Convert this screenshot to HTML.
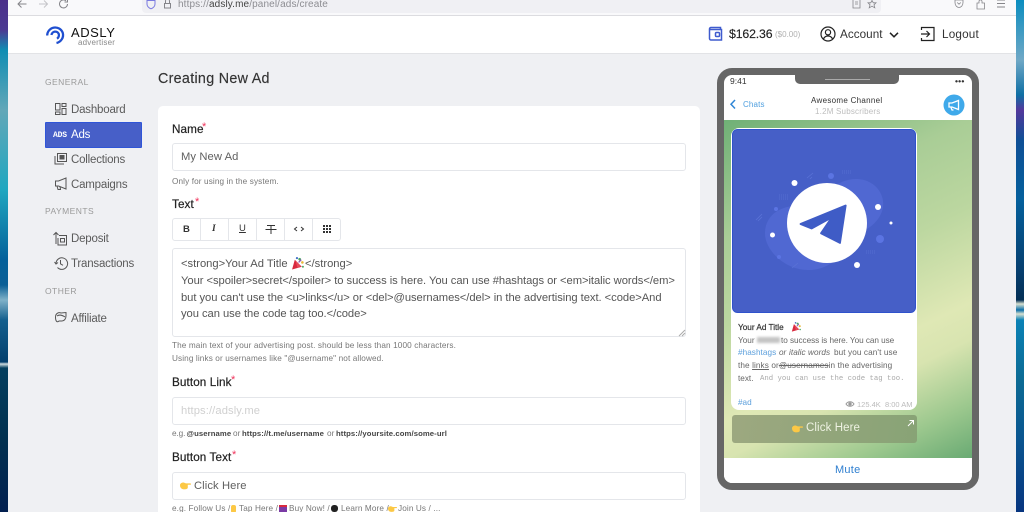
<!DOCTYPE html>
<html><head><meta charset="utf-8"><title>Adsly</title>
<style>
html,body{margin:0;padding:0;width:1024px;height:512px;overflow:hidden;background:#eff0f3}
body{position:relative;font-family:"Liberation Sans","DejaVu Sans",sans-serif;filter:blur(.35px)}
.a{position:absolute}
.t{position:absolute;white-space:nowrap;line-height:1}
.nav{font-size:11.5px;color:#5b5b5b;left:71px;letter-spacing:-.2px}
.sec{font-size:8.5px;color:#9a9a9a;left:45px;letter-spacing:.45px}
.lab{font-size:11.7px;color:#222;left:172px;font-weight:400;-webkit-text-stroke:.2px #222;letter-spacing:.1px}
.req{color:#f0325a;font-size:11px;position:absolute;line-height:1}
.inp{position:absolute;left:172px;width:512px;height:26px;border:1px solid #e4e6ea;border-radius:3px;background:#fff}
.val{font-size:11.2px;color:#5f5f5f;left:181px;letter-spacing:.1px}
.hlp{font-size:8.2px;color:#777;left:172px;letter-spacing:.12px}
.hb{font-size:7.7px;color:#444;font-weight:bold;letter-spacing:.1px}
.ta{font-size:11.2px;color:#555;left:181px}
.p{font-size:8.2px;color:#666}
svg{position:absolute;overflow:visible}
</style></head><body>
<svg style="left:0;top:0" width="0" height="0"><defs>
<symbol id="hand" viewBox="0 0 12 9"><path d="M0 4.5C0 2.5 2 1.5 4 1.5L6.5 2.5H11.2C12.2 2.5 12.2 4 11.2 4H8.5V7C8.5 8.5 7 9 4.5 9C1.5 9 0 7 0 4.5Z" fill="#fcc845"/></symbol>
<symbol id="party" viewBox="0 0 12 12"><path d="M1 11.500L3.500 2.500L10 9Z" fill="#d8293f"/><path d="M4 3L9 8.500L6 10Z" fill="#e84a5a"/><circle cx="8" cy="2" r="1.200" fill="#4aa564"/><circle cx="10.500" cy="5" r="1.200" fill="#e9b93a"/><circle cx="5.500" cy="1" r="1" fill="#4270c8"/><path d="M7 5L9.500 2.500" stroke="#8a5ab5" stroke-width="1.200"/><circle cx="11" cy="9" r=".9" fill="#4aa564"/></symbol>
</defs></svg>

<!-- desktop strips -->
<div class="a" style="left:0;top:0;width:8px;height:512px;background:linear-gradient(180deg,#4b2f8a 0,#4b3a92 30px,#0f8db3 50px,#62a7b8 110px,#1fa7c0 190px,#04609a 260px,#0b5f96 285px,#7fb1c8 300px,#145f8d 320px,#033f6d 362px,#cfdde0 364px,#043f5f 368px,#02304f 440px,#021f4f 512px)"></div>
<div class="a" style="left:1016px;top:0;width:8px;height:512px;background:linear-gradient(180deg,#0b8dbf 0,#6fa8c6 60px,#0f6fa4 95px,#53389c 110px,#0f4f96 140px,#05609c 200px,#063f6f 270px,#032f55 300px,#d8e0d0 304px,#0a6ea8 310px,#d8e0d0 314px,#0b82b6 320px,#0c6b94 380px,#0a5590 440px,#07357f 512px)"></div>

<!-- browser bar -->
<div class="a" style="left:8px;top:0;width:1008px;height:15px;background:#f9f9fb;border-bottom:1px solid #dcdce0"></div>
<div class="a" style="left:142px;top:0;width:739px;height:13px;background:#f0f0f4;border-radius:0 0 4px 4px"></div>
<svg style="left:0;top:0" width="1024" height="16" fill="none" stroke="#85858a" stroke-width="1">
<path d="M26.500 4H18M21.500 .5L18 4L21.500 7.500"/>
<path d="M39 4H47.500M44 .5L47.500 4L44 7.500" stroke="#c4c4c8"/>
<path d="M67.500 4A4 4 0 1 1 66 .8M67.500 -1V2H64.500"/>
<path d="M147 .5H155V4C155 6.500 153 8 151 8.800C149 8 147 6.500 147 4Z" stroke="#7a7ae0"/>
<path d="M164.500 3.500H170.500V8H164.500ZM165.500 3.500V1A2 2 0 0 1 169.500 1V3.500"/>
<path d="M853 -1H860V8H853ZM855 2H858M855 4H858" stroke-width=".8"/>
<path d="M872 .5L873.300 2.800H876L874 4.800L874.800 7.800L872 6.200L869.200 7.800L870 4.800L868 2.800H870.700Z" stroke-width=".8"/>
<path d="M955 0H963V2.500C963 5.500 961 7.500 959 7.500C957 7.500 955 5.500 955 2.500ZM957.200 2.500L959 4.200L960.800 2.500" stroke-width=".8"/>
<path d="M977 3H979V1C979.500 -.5 981.500 -.5 982 1V3H984.500V9H977Z" stroke-width=".8"/>
<path d="M997 0H1005M997 3.500H1005M997 7H1005"/>
</svg>
<div class="t" style="left:178px;top:0;font-size:10px;color:#8d8d92;letter-spacing:.12px">https://<span style="color:#444">adsly.me</span>/panel/ads/create</div>

<!-- header -->
<div class="a" style="left:8px;top:16px;width:1008px;height:37px;background:#fff;border-bottom:1px solid #e2e3e6"></div>
<svg style="left:44px;top:24px" width="22" height="22" fill="none" stroke="#1f4fd0" stroke-width="2.300">
<path d="M3.200 11.500A8 8 0 0 1 18.800 9C20 13.500 17 18 12.500 19"/>
<path d="M7.500 11A3.800 3.800 0 0 1 14.800 10C15.200 12 14.500 13.700 13 14.700"/>
</svg>
<div class="t" style="left:71px;top:26px;font-size:13px;color:#111;letter-spacing:.55px">ADSLY</div>
<div class="t" style="left:78px;top:38.500px;font-size:8px;color:#8a8a8a;letter-spacing:.2px">advertiser</div>

<svg style="left:708px;top:26px" width="16" height="16" fill="none" stroke="#3f5bce" stroke-width="1.500">
<path d="M1.500 3V12.500A1.500 1.500 0 0 0 3 14H13.500V3.500H3A1.500 1.500 0 0 1 1.500 3A1.500 1.500 0 0 1 3 1.500H12.500V3.500"/><rect x="7.500" y="6.500" width="4" height="4" rx="1"/>
</svg>
<div class="t" style="left:729px;top:28px;font-size:12.300px;color:#222;letter-spacing:-.15px;-webkit-text-stroke:.15px #222">$162.36</div>
<div class="t" style="left:775px;top:30.500px;font-size:8px;color:#b0b0b0">($0.00)</div>
<svg style="left:820px;top:26px" width="16" height="16" fill="none" stroke="#222" stroke-width="1.200">
<circle cx="8" cy="8" r="7"/><circle cx="8" cy="6.300" r="2.600"/><path d="M3.500 13C4.500 10.500 6 10 8 10C10 10 11.500 10.500 12.500 13"/>
</svg>
<div class="t" style="left:840px;top:29px;font-size:11.700px;color:#333;letter-spacing:.05px">Account</div>
<svg style="left:888px;top:31px" width="12" height="8" fill="none" stroke="#222" stroke-width="1.500"><path d="M2 1.800L6 5.800L10 1.800"/></svg>
<svg style="left:920px;top:26px" width="16" height="16" fill="none" stroke="#222" stroke-width="1.200">
<path d="M1.500 4V1.500H14V14.500H1.500V12M1 8H9.500M6.500 5L9.500 8L6.500 11"/>
</svg>
<div class="t" style="left:942px;top:29px;font-size:11.700px;color:#333;letter-spacing:.2px">Logout</div>

<!-- sidebar -->
<div class="t sec" style="top:78px">GENERAL</div>
<div class="t nav" style="top:104.500px">Dashboard</div>
<div class="a" style="left:45px;top:122px;width:95px;height:24px;background:#475fc8;border:.5px solid #2f55d8;border-radius:1px"></div>
<div class="t" style="left:53px;top:131px;font:bold 8px 'Liberation Mono',monospace;color:#fff;letter-spacing:-.2px">ADS</div>
<div class="t nav" style="top:129.500px;color:#fff">Ads</div>
<div class="t nav" style="top:154.500px">Collections</div>
<div class="t nav" style="top:179.500px">Campaigns</div>
<div class="t sec" style="top:207px">PAYMENTS</div>
<div class="t nav" style="top:233.500px">Deposit</div>
<div class="t nav" style="top:258.500px">Transactions</div>
<div class="t sec" style="top:287px">OTHER</div>
<div class="t nav" style="top:313.500px">Affiliate</div>
<svg style="left:0;top:0" width="150" height="340" fill="none" stroke="#555" stroke-width="1">
<path d="M55.500 103.500H60V110H55.500ZM62 103.500H66V106.500H62ZM62 108.500H66V114.500H62ZM55.500 112H60V114.500H55.500Z"/>
<path d="M57.500 153.500H66.500V161.500H57.500ZM55 156V164H64"/><rect x="60" y="155.500" width="4" height="3.500" fill="#555"/>
<path d="M55.500 181H58.500L66 178V189L58.500 186H55.500ZM57 186L58 189.500H60.500L60 186.500"/>
<path d="M56 232.500V244M53.500 235L56 232.500L58.500 235M59 235.500H66.500V245H58V238M60.500 238.500H64.500V242H60.500Z"/>
<path d="M56 263.500A5.800 5.800 0 1 1 57.500 267.500M54.500 262L56 264L58 262.500M60.500 260V263.800L63 265.300"/>
<path d="M55.500 317C55.500 313.500 58.500 312 61 313L66 312.500V316C66 319 64 321 62 321H59C57 323 55.500 321 55.500 317ZM57 316C59 314.500 62 315 65 317"/>
</svg>

<!-- main -->
<div class="t" style="left:158px;top:71.500px;font-size:14.300px;color:#333;letter-spacing:.3px;-webkit-text-stroke:.15px #333">Creating New Ad</div>
<div class="a" style="left:158px;top:106px;width:542px;height:420px;background:#fff;border-radius:5px"></div>

<div class="t lab" style="top:123.500px">Name</div><span class="req" style="left:202px;top:122px">*</span>
<div class="inp" style="top:143px"></div>
<div class="t val" style="top:152px">My New Ad</div>
<div class="t hlp" style="top:177.500px">Only for using in the system.</div>

<div class="t lab" style="top:198.500px">Text</div><span class="req" style="left:195px;top:197px">*</span>
<div class="a" style="left:172px;top:218px;width:167px;height:21px;border:1px solid #e4e6ea;border-radius:3px;background:#fff"></div>
<div class="a" style="left:200px;top:219px;width:1px;height:21px;background:#e4e6ea"></div>
<div class="a" style="left:228px;top:219px;width:1px;height:21px;background:#e4e6ea"></div>
<div class="a" style="left:256px;top:219px;width:1px;height:21px;background:#e4e6ea"></div>
<div class="a" style="left:284px;top:219px;width:1px;height:21px;background:#e4e6ea"></div>
<div class="a" style="left:312px;top:219px;width:1px;height:21px;background:#e4e6ea"></div>
<div class="t" style="left:183px;top:224.500px;font-size:9.500px;font-weight:bold;color:#333">B</div>
<div class="t" style="left:212px;top:224.500px;font-size:9.500px;font-weight:bold;font-style:italic;color:#333;font-family:'Liberation Serif',serif">I</div>
<div class="t" style="left:239px;top:224px;font-size:9.500px;color:#333;text-decoration:underline">U</div>
<svg style="left:0;top:0" width="340" height="240" fill="none" stroke="#333" stroke-width="1">
<path d="M267 225.500H275M271 225.500V234M265.500 229.500H276.500"/>
<path d="M297 227L294.500 229L297 231M301 227L303.500 229L301 231"/>
</svg>
<svg style="left:322px;top:224px" width="10" height="10" fill="#333"><path d="M1 1h2v2H1zM4 1h2v2H4zM7 1h2v2H7zM1 4h2v2H1zM4 4h2v2H4zM7 4h2v2H7zM1 7h2v2H1zM4 7h2v2H4zM7 7h2v2H7z"/></svg>

<div class="a" style="left:172px;top:248px;width:512px;height:87px;border:1px solid #e4e6ea;border-radius:3px;background:#fff"></div>
<svg style="left:678px;top:329px" width="8" height="8" stroke="#aaa" stroke-width="1"><path d="M1 7L7 1M4 7L7 4"/></svg>
<div class="t ta" style="top:259px">&lt;strong&gt;Your Ad Title</div>
<svg style="left:291px;top:257px" width="13" height="13"><use href="#party"/></svg>
<div class="t ta" style="left:305px;top:259px">&lt;/strong&gt;</div>
<div class="t ta" style="top:276px;letter-spacing:-.04px">Your &lt;spoiler&gt;secret&lt;/spoiler&gt; to success is here. You can use #hashtags or &lt;em&gt;italic words&lt;/em&gt;</div>
<div class="t ta" style="top:292.500px;letter-spacing:-.04px">but you can't use the &lt;u&gt;links&lt;/u&gt; or &lt;del&gt;@usernames&lt;/del&gt; in the advertising text. &lt;code&gt;And</div>
<div class="t ta" style="top:309px;letter-spacing:-.04px">you can use the code tag too.&lt;/code&gt;</div>
<div class="t hlp" style="top:342px">The main text of your advertising post. should be less than 1000 characters.</div>
<div class="t hlp" style="top:354.500px">Using links or usernames like "@username" not allowed.</div>

<div class="t lab" style="top:376.500px">Button Link</div><span class="req" style="left:231px;top:375px">*</span>
<div class="inp" style="top:397px"></div>
<div class="t val" style="top:406px;color:#d0d0d0">https://adsly.me</div>
<div class="t hlp" style="top:430px;letter-spacing:-.1px">e.g.</div>
<div class="t hb" style="left:186.500px;top:430.300px">@username</div>
<div class="t hlp" style="left:233px;top:430px">or</div>
<div class="t hb" style="left:242px;top:430.300px">https://t.me/username</div>
<div class="t hlp" style="left:327px;top:430px">or</div>
<div class="t hb" style="left:336px;top:430.300px">https://yoursite.com/some-url</div>

<div class="t lab" style="top:451.500px">Button Text</div><span class="req" style="left:232px;top:450px">*</span>
<div class="inp" style="top:472px"></div>
<svg style="left:180px;top:481px" width="11" height="8.500"><use href="#hand"/></svg>
<div class="t val" style="left:194px;top:481px">Click Here</div>
<div class="t hlp" style="top:505px">e.g. Follow Us /</div>
<div class="a" style="left:231px;top:505px;width:5px;height:8px;background:#fcc845;border-radius:2px"></div>
<div class="t hlp" style="left:239px;top:505px">Tap Here /</div>
<div class="a" style="left:279px;top:505px;width:8px;height:8px;background:#7a3aa5;border-top:2px solid #d8293f;box-sizing:border-box"></div>
<div class="t hlp" style="left:289px;top:505px">Buy Now! /</div>
<div class="a" style="left:331px;top:505px;width:7px;height:7px;background:#222;border-radius:3px"></div>
<div class="t hlp" style="left:341px;top:505px">Learn More /</div>
<svg style="left:388px;top:505px" width="9" height="7"><use href="#hand"/></svg>
<div class="t hlp" style="left:398px;top:505px">Join Us / ...</div>

<!-- phone -->
<div class="a" style="left:717px;top:68px;width:248px;height:408px;border:7px solid #666;border-radius:15px;background:#fff;overflow:hidden">
  <div class="a" style="left:0;top:45px;width:248px;height:338px;background:linear-gradient(154deg,#6fb076 0,#a9cd96 26%,#bcd7a0 45%,#dfe8b5 66%,#d8e4b0 74%,#9cc88e 88%,#69aa73 100%)"></div>
</div>
<div class="a" style="left:795px;top:75px;width:104px;height:9px;background:#666;border-radius:0 0 5px 5px"></div>
<div class="a" style="left:825px;top:79px;width:45px;height:1px;background:#aaa"></div>
<div class="t" style="left:730px;top:77px;font-size:8.500px;color:#333">9:41</div>
<div class="t" style="left:955px;top:77px;font-size:8.500px;font-weight:bold;color:#333;letter-spacing:.2px">•••</div>
<svg style="left:729px;top:99px" width="8" height="11" fill="none" stroke="#2f86d6" stroke-width="1.500"><path d="M6 1L2 5.300L6 9.500"/></svg>
<div class="t" style="left:743px;top:100.500px;font-size:8px;color:#4f9fdf;letter-spacing:.15px">Chats</div>
<div class="t" style="left:811px;top:96.500px;font-size:8px;color:#333;letter-spacing:.3px">Awesome Channel</div>
<div class="t" style="left:815px;top:107.500px;font-size:8px;color:#bdbdbd;letter-spacing:.2px">1.2M Subscribers</div>
<svg style="left:943px;top:94px" width="22" height="22"><circle cx="11" cy="11" r="10.500" fill="#3fa9ea"/><path d="M6 9H9L15.500 6.500V15.500L9 13H6ZM8 13.500L9 16H10.500" fill="none" stroke="#fff" stroke-width="1.300"/></svg>

<!-- bubble -->
<div class="a" style="left:731px;top:128px;width:186px;height:282px;background:#fff;border-radius:8px"></div>
<svg style="left:732px;top:129px" width="184" height="184" viewBox="732 129 184 184">
<rect x="732.500" y="129.500" width="183" height="183" rx="5" fill="#465fc7" stroke="#2f52cc" stroke-width="1"/>
<path d="M830 190C845 175 870 175 880 192C890 210 875 228 858 233C850 250 830 271 808 270C785 270 764 250 765 232C766 212 785 205 800 206Z" fill="#5068d2"/>
<circle cx="827" cy="223" r="40" fill="#fff"/>
<path d="M845.700 205.500L840 243L821 233.300L831.700 217.500L811.700 228.500L800.500 224Z" fill="#3f5cc6" stroke="#3f5cc6" stroke-width="1.800" stroke-linejoin="round"/>
<g fill="#fff"><circle cx="794.500" cy="183" r="3"/><circle cx="878" cy="207" r="3"/><circle cx="772.500" cy="235" r="2.500"/><circle cx="857" cy="265" r="3"/><circle cx="891" cy="223" r="1.500"/></g>
<g fill="#5b74e2"><circle cx="880" cy="239" r="4"/><circle cx="831" cy="176" r="3"/><circle cx="776" cy="209" r="2"/><circle cx="779" cy="257" r="2"/></g>
<g stroke="#5a72d6" stroke-width=".8"><path d="M807 178L813 173M810 179L812 177M756 220L762 214M758 221L762 217M792 268L798 263"/><path d="M779 195H788M779 197H788M779 199H788M842 171H851M842 173H851M866 251H875M866 253H875" stroke-dasharray="1 1"/></g>
</svg>
<div class="t p" style="left:738px;top:323.500px;color:#333;-webkit-text-stroke:.2px #333">Your Ad Title</div>
<svg style="left:791px;top:322px" width="10" height="10"><use href="#party"/></svg>
<div class="t p" style="left:738px;top:336.500px">Your</div>
<div class="a" style="left:757px;top:337px;width:23px;height:6px;background:#c4c4c4;filter:blur(1.200px)"></div>
<div class="t p" style="left:781px;top:336.500px;letter-spacing:-.05px">to success is here. You can use</div>
<div class="t p" style="left:738px;top:349px;color:#5b9fdc;letter-spacing:.05px">#hashtags</div>
<div class="t p" style="left:779px;top:349px"><i>or</i></div>
<div class="t p" style="left:789px;top:349px;letter-spacing:.05px"><i>italic words</i></div>
<div class="t p" style="left:834px;top:349px;letter-spacing:.1px">but you can't use</div>
<div class="t p" style="left:738px;top:361.500px;letter-spacing:.1px">the <u>links</u> or<s>@usernames</s>in the advertising</div>
<div class="t p" style="left:738px;top:374.500px">text.</div>
<div class="t" style="left:760px;top:374.500px;font:7.300px 'Liberation Mono',monospace;color:#aaa">And you can use the code tag too.</div>
<div class="t p" style="left:738px;top:399px;color:#5b9fdc">#ad</div>
<svg style="left:845px;top:400px" width="10" height="8" fill="none" stroke="#999" stroke-width="1"><path d="M1 4C3 1 7 1 9 4C7 7 3 7 1 4Z"/><circle cx="5" cy="4" r="1.200" fill="#999"/></svg>
<div class="t" style="left:857px;top:400.500px;font-size:7.500px;color:#bbb">125.4K</div>
<div class="t" style="left:885px;top:400.500px;font-size:7.500px;color:#bbb">8:00 AM</div>

<!-- click button -->
<div class="a" style="left:732px;top:415px;width:185px;height:28px;background:linear-gradient(100deg,#9da880,#88a376);border-radius:3px"></div>
<svg style="left:792px;top:424px" width="11" height="8.500"><use href="#hand"/></svg>
<div class="t" style="left:806px;top:423px;font-size:11.500px;color:#eef2e2;letter-spacing:.1px">Click Here</div>
<svg style="left:907px;top:419px" width="8" height="8" fill="none" stroke="#fff" stroke-width="1"><path d="M1 7L6.500 1.500M2.500 1.500H6.500V5.500"/></svg>

<div class="a" style="left:724px;top:458px;width:248px;height:25px;background:#fff;border-radius:0 0 8px 8px"></div>
<div class="t" style="left:835px;top:465px;font-size:11px;color:#2f7fd0;letter-spacing:.25px">Mute</div>
</body></html>
